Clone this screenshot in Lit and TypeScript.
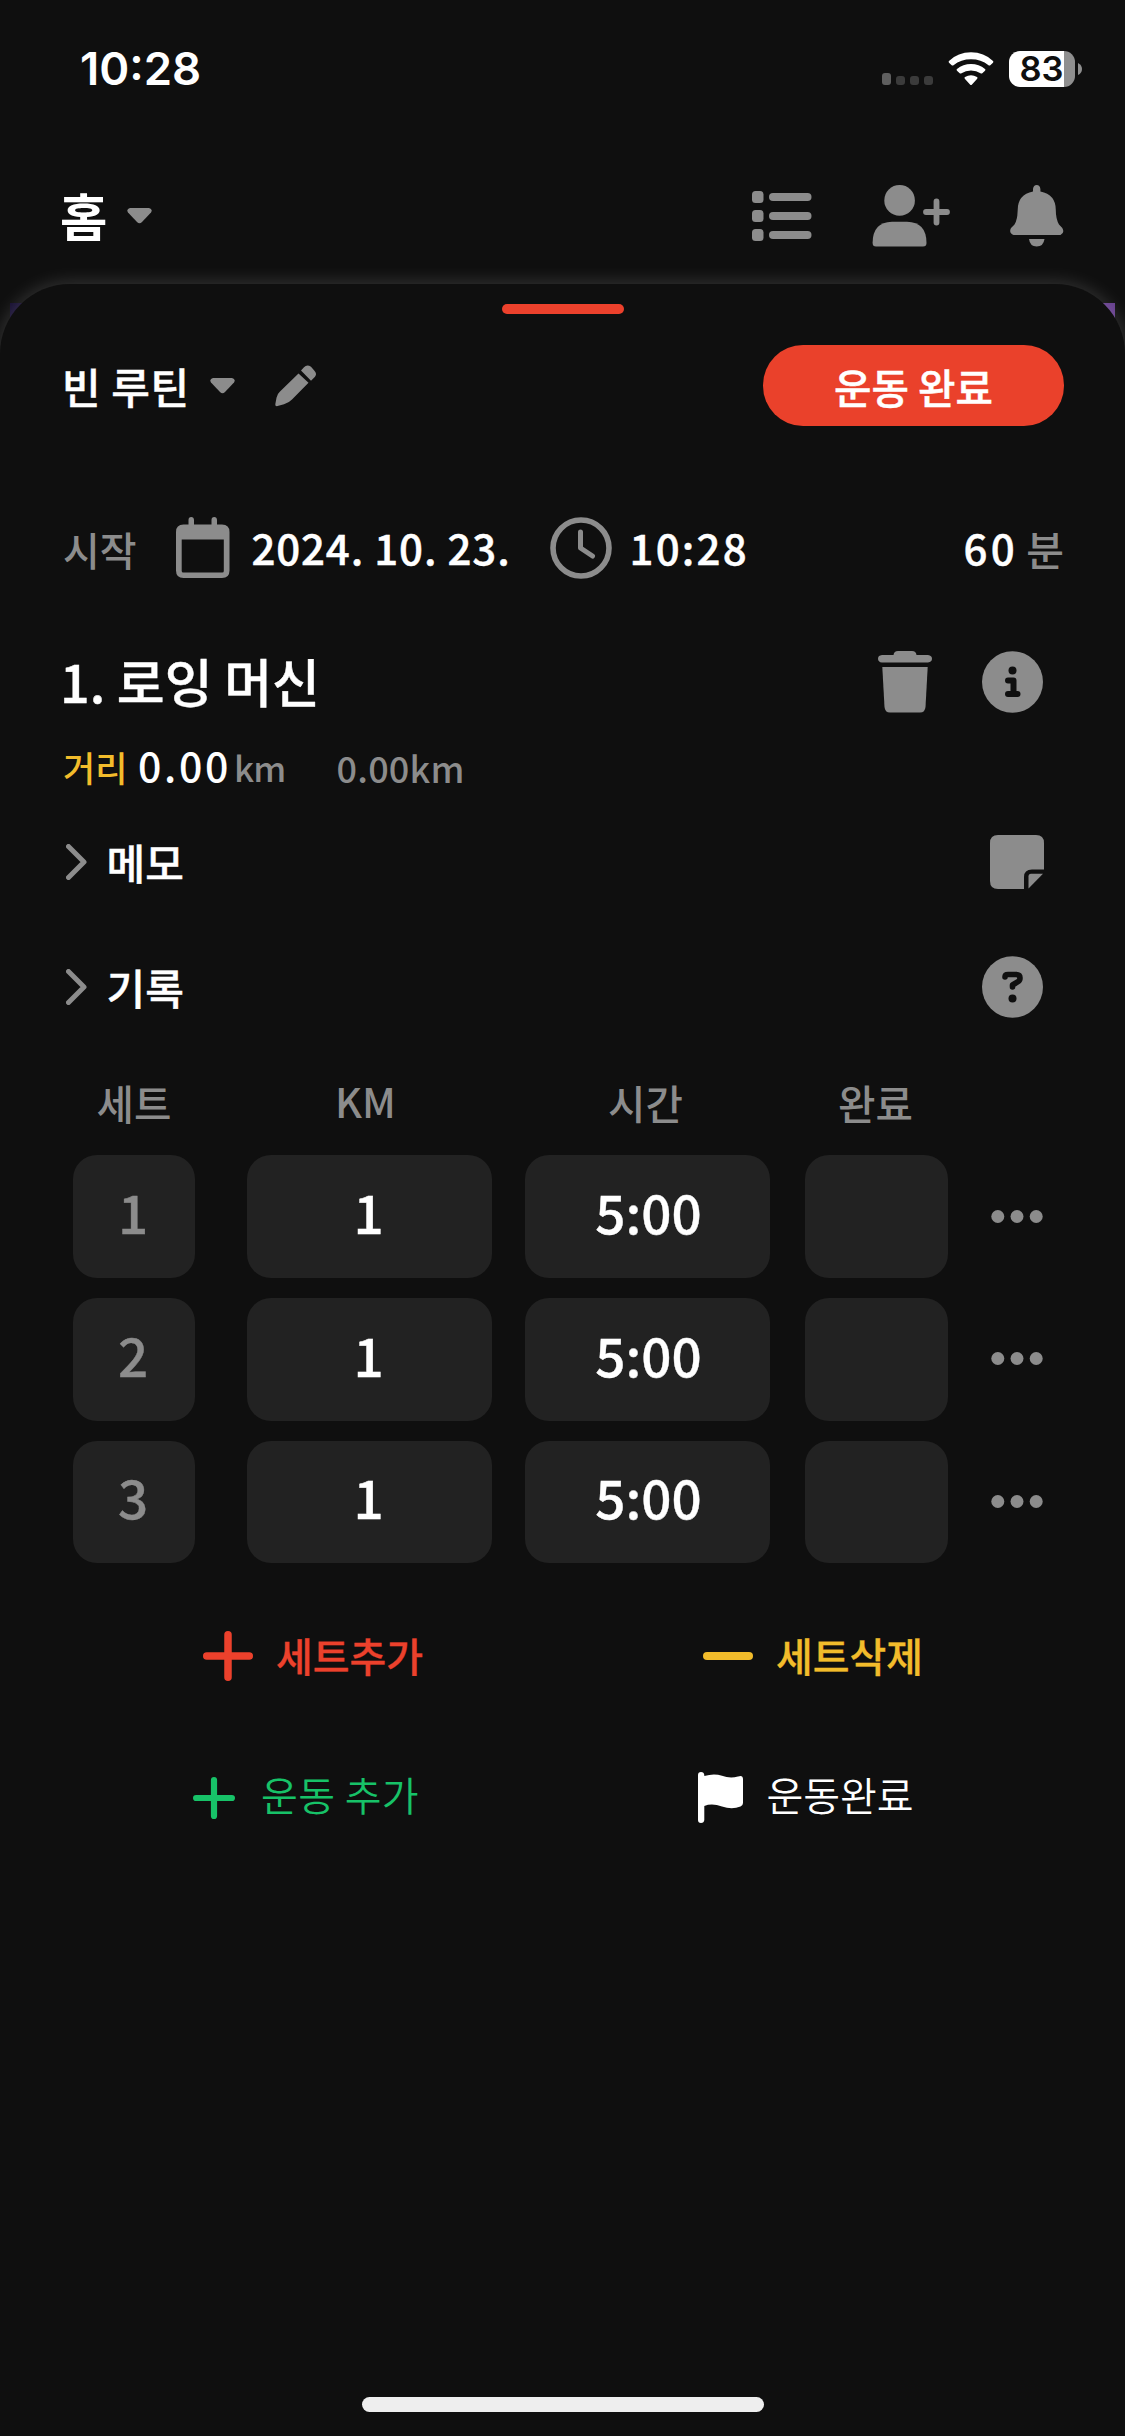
import { LitElement, html, css, svg } from "lit";
import { customElement, property } from "lit/decorators.js";

const caret = html`<svg class="caret" width="25" height="16" viewBox="0 0 25 16"><path d="M3 0H22Q26 1 24 4.500L15 14Q12.500 16.500 10 14L1 4.500Q-1 1 3 0Z" fill="#8c8c8c"/></svg>`;
const chevron = html`<svg class="chev" width="21" height="36" viewBox="0 0 21 36"><path d="M2.500 2.500L18 18L2.500 33.500" fill="none" stroke="#8c8c8c" stroke-width="5" stroke-linecap="round" stroke-linejoin="round"/></svg>`;

const plus = (size: number, w: number, color: string) => html`
  <svg width=${size} height=${size} viewBox="0 0 ${size} ${size}">
    <path d="M${w / 2} ${size / 2}H${size - w / 2}M${size / 2} ${w / 2}V${size - w / 2}" stroke=${color} stroke-width=${w} stroke-linecap="round"/>
  </svg>`;

@customElement("set-row")
export class SetRow extends LitElement {
  @property({ type: Number }) index = 1;
  @property() km = "1";
  @property() time = "5:00";

  static styles = css`
    :host { display: grid; justify-content: start; height: 122.600px;
      grid-template-columns: 122px 52px 245px 33px 245px 35px 143px 43px 52px; }
    .cell { display: flex; align-items: center; justify-content: center; box-sizing: border-box; padding-bottom: 11px;
      background: #222222; border-radius: 24px; color: #fff; font-size: 53px; line-height: 52px; font-weight: 500; }
    .cell span { -webkit-text-stroke: .4px currentColor; }
    .num { grid-column: 1; color: #8c8c8c; padding-right: 2px; }
    .km { grid-column: 3; padding-right: 2px; }
    .time { grid-column: 5; padding-left: 2px; }
    .done { grid-column: 7; }
    .more { grid-column: 9; align-self: center; }
  `;

  render() {
    return html`
      <div class="cell num"><span>${this.index}</span></div>
      <div class="cell km"><span>${this.km}</span></div>
      <div class="cell time"><span>${this.time}</span></div>
      <div class="cell done"></div>
      <svg class="more" width="52" height="14" viewBox="0 0 52 14" fill="#8c8c8c">
        <circle cx="6.800" cy="6.500" r="6.500"/><circle cx="26" cy="6.500" r="6.500"/><circle cx="45.200" cy="6.500" r="6.500"/>
      </svg>`;
  }
}

@customElement("app-root")
export class AppRoot extends LitElement {
  static styles = css`
    :host { display: block; width: 1125px; height: 2436px; background: #0f0f0f; color: #fff; overflow: hidden; position: relative;
      font-family: "Noto Sans CJK KR", sans-serif; font-weight: 500; }
    .page { display: flex; flex-direction: column; height: 2436px; }
    svg { display: block; flex: none; }
    span { white-space: nowrap; line-height: 1; flex: none; }
    .grow { flex: 1; }
    .gray { color: #8c8c8c; }
    .strong { -webkit-text-stroke: .45px currentColor; }
    .status { display: flex; align-items: center; height: 138px; padding: 0 43px 0 80px; font-family: Inter, sans-serif; }
    .clock { font-size: 45.500px; font-weight: 600; }
    .signal { margin-right: 14px; } .wifi { margin-right: 15px; }
    .battery { display: flex; align-items: center; gap: 3px; }
    .level { display: flex; align-items: center; justify-content: center; width: 66px; height: 36px; border-radius: 11px; box-sizing: border-box;
      padding-right: 1px; padding-top: 1px; background: linear-gradient(90deg, #fff 55px, #8f8f8f 55px); color: #0f0f0f; font-size: 34.500px; font-weight: 600; }
    .header { display: flex; align-items: center; height: 136px; margin-top: 10px; padding: 0 61px 0 60px; }
    .home { font-size: 51.500px; font-weight: 700; margin-bottom: 2.500px; }
    .header .caret { margin-left: 20px; }
    .icons { display: flex; align-items: center; gap: 60px; }
    .sheet { position: relative; flex: 1; display: flex; flex-direction: column; background: #0f0f0f; border-radius: 70px 70px 0 0;
      box-shadow: 0 0 19px rgba(255,255,255,.19); }
    .peek { position: absolute; left: 10px; top: 303px; width: 1105px; height: 60px; background: linear-gradient(90deg, #150d30, #643c8c); }
    .handle { width: 122px; height: 10px; border-radius: 5px; background: #ec412c; margin: 20px auto 0; }
    .row { display: flex; align-items: center; padding: 0 61px 0 63px; }
    .routine { height: 81px; margin-top: 31px; font-size: 42px; padding-left: 62px; }
    .routine .name { letter-spacing: .6px; }
    .routine .caret { margin-left: 20px; margin-right: 40px; }
    .finish { display: flex; align-items: center; justify-content: center; box-sizing: border-box; padding-top: 3px; width: 301px; height: 81px;
      border-radius: 40px; background: #ea412b; font-size: 40.700px; }
    .when { height: 62px; margin-top: 91px; font-size: 42px; }
    .when .strong { margin-bottom: 2.500px; }
    .start { width: 113px; font-size: 40px; margin-top: 2px; }
    .date { margin-left: 21.500px; width: 298px; letter-spacing: .850px; }
    .tm { margin-left: 18px; letter-spacing: 2.200px; }
    .dur { letter-spacing: 3.500px; }
    .min { font-size: 41px; margin-left: 8px; }
    .exercise { height: 62px; margin-top: 72px; font-size: 52px; padding-left: 60px; padding-right: 82px; }
    .title { margin-bottom: 3px; }
    .info { margin-left: 50px; }
    .stats { height: 40px; margin-top: 35px; font-size: 35px; }
    .stats span { margin-bottom: 3px; }
    .stats .dist { width: 75px; }
    .stats .big { font-size: 41px; letter-spacing: 2.700px; width: 96px; margin-bottom: 6.500px; }
    .stats .km { letter-spacing: -1px; width: 102.500px; }
    .goal { font-size: 36px; letter-spacing: .2px; }
    .yellow { color: #f2bc2b; }
    .memo { height: 54px; margin-top: 47px; font-size: 42px; padding-right: 81px; }
    .record { height: 61px; margin-top: 67px; font-size: 42px; padding-right: 82px; }
    .chev { margin-left: 3px; margin-right: 19.500px; }
    .heads { display: grid; grid-template-columns: 122px 48px 245px 34px 247px 35px 143px; height: 44px; margin: 64px 0 0 73px;
      align-items: center; justify-items: center; font-size: 40.700px; color: #8c8c8c; }
    .h0 { grid-column: 1; } .h1 { grid-column: 3; margin-bottom: 3px; } .h2 { grid-column: 5; } .h3 { grid-column: 7; }
    .sets { display: grid; gap: 20px; margin: 30.400px 0 0 73px; }
    .actions { display: grid; grid-template-columns: 500px 500px; padding-left: 63px; height: 50px; margin-top: 67.700px; font-size: 40px; }
    .actions > div { display: flex; align-items: center; justify-content: center; gap: 23px; }
    .actions span { margin-bottom: 2.500px; -webkit-text-stroke: .3px currentColor; }
    .red { color: #ec412c; } .green { color: #17c268; }
    .actions.second { margin-top: 91px; height: 52px; padding-left: 56px; font-weight: 350; }
    .actions.second span { margin-bottom: 7px; -webkit-text-stroke: 0; }
    .actions .green { gap: 26px; letter-spacing: .4px; }
    .indicator { width: 402px; height: 15px; border-radius: 8px; background: #eeeeee; margin: auto auto 24px; }
  `;

  render() {
    return html`
      <div class="page">
        <div class="status">
          <span class="clock">10:28</span>
          <div class="grow"></div>
          <svg class="signal" width="52" height="34" viewBox="0 0 52 34">
            <rect x="0" y="21" width="9" height="12" rx="3" fill="#5f5f5f"/>
            ${[14, 28, 42].map(x => svg`<rect x=${x} y="24" width="9" height="9" rx="3" fill="#3b3b3b"/>`)}
          </svg>
          <svg class="wifi" width="46" height="34" viewBox="0 0 46 36" preserveAspectRatio="none" fill="#fff">
            <path d="M1 9.500Q10 .3 23 .3T45 9.500Q45.800 10.400 45 11.300L42.300 14Q41.400 14.800 40.500 14Q33 7.700 23 7.700T5.500 14Q4.600 14.800 3.700 14L1 11.300Q.2 10.400 1 9.500Z"/>
            <path d="M9 18Q15 12.600 23 12.600T37 18Q38 18.900 37 19.800L34.300 22.500Q33.400 23.200 32.500 22.500Q28.500 19.600 23 19.600T13.500 22.500Q12.600 23.200 11.700 22.500L9 19.800Q8 18.900 9 18Z"/>
            <path d="M17 26.600Q23 22.600 29 26.600Q30 27.500 29.200 28.400L24 34.500Q23 35.600 22 34.500L16.800 28.400Q16 27.500 17 26.600Z"/>
          </svg>
          <div class="battery">
            <div class="level"><span>83</span></div>
            <svg width="4" height="12" viewBox="0 0 4 12"><path d="M0 0Q4 2 4 6T0 12Z" fill="#8f8f8f"/></svg>
          </div>
        </div>

        <div class="header">
          <span class="home">홈</span>
          ${caret}
          <div class="grow"></div>
          <div class="icons">
            <svg width="60" height="50" viewBox="0 0 60 50" fill="#8c8c8c">
              ${[0, 19, 38].map(y => svg`<rect x="0" y=${y} width="11.500" height="12" rx="3.500"/><rect x="17" y=${y + 2} width="42.500" height="8" rx="4"/>`)}
            </svg>
            <svg width="78" height="62" viewBox="0 0 78 62" fill="#8c8c8c">
              <circle cx="27.600" cy="15.400" r="15.300"/>
              <path d="M.6 58Q.6 37 20 36.700H35Q54.500 37 54.500 58Q54.500 61.500 51 61.500H4Q.6 61.500 .6 58Z"/>
              <path d="M54 27H75M64.500 16.500V37.500" stroke="#8c8c8c" stroke-width="5.800" stroke-linecap="round"/>
            </svg>
            <svg width="54" height="62" viewBox="0 0 54 62" fill="#8c8c8c">
              <path d="M23 6.500V4Q23.500 0 26.700 0T30.400 4V6.500Q45.800 9.500 45.800 25Q45.800 34 49 39.500L52.300 43Q55 48 50.500 50H3.500Q-1.500 48 1 43L4.500 39.500Q7.700 34 7.700 25Q7.700 9.500 23 6.500Z"/>
              <path d="M19 54H34.500Q33.500 61.500 26.700 61.500T19 54Z"/>
            </svg>
          </div>
        </div>

        <div class="peek"></div>
        <div class="sheet">
          <div class="handle"></div>
          <div class="row routine">
            <span class="name strong">빈 루틴</span>
            ${caret}
            <svg width="42" height="42" viewBox="0 0 42 45" preserveAspectRatio="none" fill="#8c8c8c">
              <path d="M23.500 9L33.500 19L17 37Q14 40.500 9 42L2.500 44Q0 44.500 .3 42L1.500 35Q2 31.500 5 28.500Z"/>
              <path d="M26 6L29 2.500Q32-1 36 2L39 5.500Q42.500 9 40 12.500L36 17Z"/>
            </svg>
            <div class="grow"></div>
            <div class="finish"><span class="strong">운동 완료</span></div>
          </div>

          <div class="row when">
            <span class="gray start">시작</span>
            <svg class="cal" width="54" height="62" viewBox="0 0 54 62" fill="#8c8c8c">
              <path d="M12.500 7.500V3Q12.500 0 15.200 0T18 3V7.500H35.500V3Q35.500 0 38.200 0T41 3V7.500H46Q53.500 7.500 53.500 15V53.500Q53.500 61 46 61H7.500Q0 61 0 53.500V15Q0 7.500 7.500 7.500ZM5.700 22.500V54Q5.700 55.500 7.200 55.500H46.300Q47.800 55.500 47.800 54V22.500Z" fill-rule="evenodd"/>
            </svg>
            <span class="date strong">2024. 10. 23.</span>
            <svg class="clk" width="62" height="62" viewBox="0 0 62 62" fill="none" stroke="#8c8c8c">
              <circle cx="31" cy="31" r="28" stroke-width="5.600"/><path d="M30.500 15V31L42.500 39" stroke-width="5" stroke-linecap="round" stroke-linejoin="round"/>
            </svg>
            <span class="tm strong">10:28</span>
            <div class="grow"></div>
            <span class="dur strong">60</span>
            <span class="gray min">분</span>
          </div>

          <div class="row exercise">
            <span class="title strong">1. 로잉 머신</span>
            <div class="grow"></div>
            <svg width="54" height="62" viewBox="0 0 54 62" fill="#8c8c8c">
              <path d="M4 4H15.500Q16 0 20 0H34Q38 0 38.500 4H50Q54 4.500 54 7.700T50 11.500H4Q0 11 0 7.700T4 4Z"/>
              <path d="M4.300 16H49.700L47.500 56Q47 61.500 42 61.500H12Q7 61.500 6.500 56Z"/>
            </svg>
            <svg class="info" width="61" height="62" viewBox="0 0 61 62">
              <ellipse cx="30.500" cy="31" rx="30.500" ry="30.800" fill="#8c8c8c"/>
              <circle cx="30.500" cy="19.500" r="4" fill="#0f0f0f"/>
              <path d="M26 29.500H31.500V43M26 43H35.500" fill="none" stroke="#0f0f0f" stroke-width="6" stroke-linecap="round" stroke-linejoin="round"/>
            </svg>
          </div>

          <div class="row stats">
            <span class="yellow dist">거리</span>
            <span class="big">0.00</span>
            <span class="gray km">km</span>
            <span class="gray goal">0.00km</span>
          </div>

          <div class="row memo">
            ${chevron}<span class="strong">메모</span>
            <div class="grow"></div>
            <svg width="54" height="54" viewBox="0 0 54 54" fill="#8c8c8c">
              <path d="M8 0H46Q54 0 54 8V34.500H42Q34 34.500 34 42V54H8Q0 54 0 46V8Q0 0 8 0Z"/>
              <path d="M41 38.700H53L38.500 53.500V41.200Q38.500 38.700 41 38.700Z"/>
            </svg>
          </div>

          <div class="row record">
            ${chevron}<span class="strong">기록</span>
            <div class="grow"></div>
            <svg width="61" height="62" viewBox="0 0 61 62">
              <ellipse cx="30.500" cy="31" rx="30.500" ry="30.800" fill="#8c8c8c"/>
              <circle cx="30.500" cy="42.500" r="4" fill="#0f0f0f"/>
              <path d="M23 21Q23 18.500 26 18.500H34Q38 18.500 38 22Q38 24.500 36 25.700L30.500 29V31" fill="none" stroke="#0f0f0f" stroke-width="5.600" stroke-linecap="round" stroke-linejoin="round"/>
            </svg>
          </div>

          <div class="heads">
            <span class="h0">세트</span>
            <span class="h1">KM</span>
            <span class="h2">시간</span>
            <span class="h3">완료</span>
          </div>

          <div class="sets">${[1, 2, 3].map(i => html`<set-row .index=${i}></set-row>`)}</div>

          <div class="actions">
            <div class="red">${plus(50, 7.500, "#ec412c")}<span>세트추가</span></div>
            <div class="yellow"><svg width="50" height="8" viewBox="0 0 50 8"><rect width="50" height="8" rx="4" fill="#f2bc2b"/></svg><span>세트삭제</span></div>
          </div>
          <div class="actions second">
            <div class="green">${plus(42, 6.200, "#17c268")}<span>운동 추가</span></div>
            <div>
              <svg width="45" height="51" viewBox="0 0 45 51" fill="#fff">
                <path d="M0 3Q0 0 3 0T6.300 3V4Q16 1 24 3.800T40 4.500Q44.800 2.500 45 7V31Q45 33.500 42.500 34.500Q34 38 24 34.500T6.300 34V48Q6 51 3 51T0 48Z"/>
              </svg>
              <span>운동완료</span>
            </div>
          </div>

          <div class="indicator"></div>
        </div>
      </div>`;
  }
}
